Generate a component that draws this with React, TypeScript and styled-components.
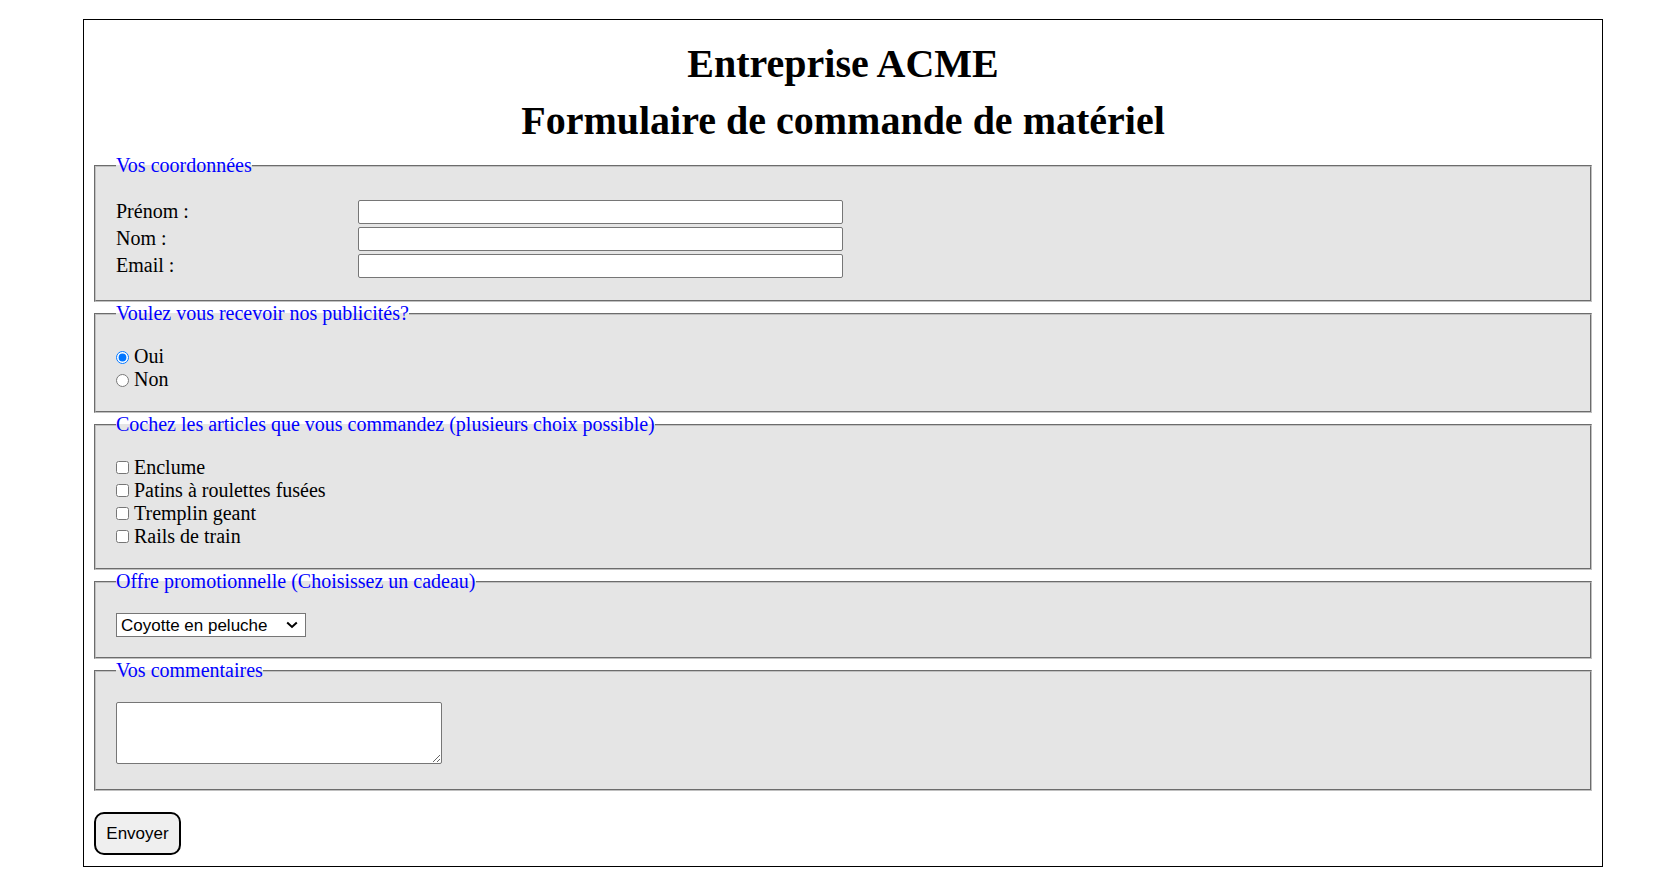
import React from "react";
import styled, { createGlobalStyle } from "styled-components";

const GlobalStyle = createGlobalStyle`
  html, body {
    margin: 0;
    padding: 0;
    background: #ffffff;
  }
  body {
    font-family: "Liberation Serif", "Times New Roman", serif;
    font-size: 20px;
    color: #000000;
  }
  * {
    box-sizing: border-box;
  }
`;

const Page = styled.div`
  padding: 19px 68px 19px 83px;
`;

const Frame = styled.form`
  border: 1px solid #000000;
  padding: 21px 10px 11px;
  display: flex;
  flex-direction: column;
  align-items: stretch;
`;

const Header = styled.header`
  text-align: center;
  margin-bottom: 10px;
`;

const Title = styled.h1<{ $gap?: number }>`
  margin: 0 0 ${(p) => p.$gap ?? 0}px;
  font-family: "Liberation Serif", "Times New Roman", serif;
  font-size: 40px;
  line-height: 46px;
  font-weight: 700;
`;

const Fieldset = styled.fieldset`
  margin: 0;
  padding: 20px;
  border: 2px groove #c0c0c0;
  background: #e5e5e5;
  min-width: 0;
`;

const Legend = styled.legend`
  padding: 0;
  color: #0000ff;
  font-family: "Liberation Serif", "Times New Roman", serif;
  font-size: 20px;
  line-height: 23px;
`;

const Rows = styled.div`
  display: flex;
  flex-direction: column;
  padding: 1px 0 1px;
`;

const Row = styled.div`
  display: flex;
  align-items: center;
  height: 27px;
`;

const FieldLabel = styled.label`
  width: 242px;
  flex: none;
  line-height: 23px;
`;

const TextInput = styled.input`
  width: 485px;
  height: 24px;
  margin: 0;
  padding: 1px 3px;
  border: 1px solid #767676;
  border-radius: 2px;
  background: #ffffff;
  font-family: "Liberation Sans", Arial, sans-serif;
  font-size: 15px;
`;

const Choice = styled.label`
  display: block;
  line-height: 23px;
  height: 23px;
`;

const Mark = styled.input<{ $drop?: number }>`
  width: 13px;
  height: 13px;
  margin: 0 5px 0 0;
  vertical-align: ${(p) => (p.$drop ? `-${p.$drop}px` : "baseline")};
`;

const SelectWrap = styled.div`
  position: relative;
  width: 190px;
`;

const GiftSelect = styled.select`
  display: block;
  width: 190px;
  height: 24px;
  margin: 0;
  padding: 0 24px 0 4px;
  border: 1px solid #767676;
  border-radius: 0;
  background-color: #ffffff;
  color: #000000;
  font-family: "Liberation Sans", Arial, sans-serif;
  font-size: 17px;
  appearance: none;
  -webkit-appearance: none;
`;

const Chevron = styled.svg`
  position: absolute;
  right: 8px;
  top: 8px;
  width: 12px;
  height: 8px;
  pointer-events: none;
`;

const Comments = styled.textarea`
  display: block;
  width: 326px;
  height: 62px;
  margin: 0 0 5px;
  border: 1px solid #767676;
  border-radius: 2px;
  background: #ffffff;
  font-family: "Liberation Mono", monospace;
  font-size: 15px;
`;

const SubmitButton = styled.button`
  align-self: flex-start;
  margin-top: 21px;
  width: 87px;
  height: 43px;
  padding: 0;
  border: 2px solid #000000;
  border-radius: 10px;
  background: #efefef;
  color: #000000;
  font-family: "Liberation Sans", Arial, sans-serif;
  font-size: 17px;
  cursor: pointer;
`;

const contactFields = [
  { id: "prenom", label: "Prénom :", type: "text" },
  { id: "nom", label: "Nom :", type: "text" },
  { id: "email", label: "Email :", type: "email" },
];

const articles = [
  "Enclume",
  "Patins à roulettes fusées",
  "Tremplin geant",
  "Rails de train",
];

export default function App() {
  return (
    <>
      <GlobalStyle />
      <Page>
        <Frame onSubmit={(e) => e.preventDefault()}>
          <Header>
            <Title $gap={11}>Entreprise ACME</Title>
            <Title as="h2">Formulaire de commande de matériel</Title>
          </Header>

          <Fieldset>
            <Legend>Vos coordonnées</Legend>
            <Rows>
              {contactFields.map((f) => (
                <Row key={f.id}>
                  <FieldLabel htmlFor={f.id}>{f.label}</FieldLabel>
                  <TextInput id={f.id} name={f.id} type={f.type} />
                </Row>
              ))}
            </Rows>
          </Fieldset>

          <Fieldset>
            <Legend>Voulez vous recevoir nos publicités?</Legend>
            <Choice>
              <Mark type="radio" name="pub" value="oui" defaultChecked $drop={1} />
              Oui
            </Choice>
            <Choice>
              <Mark type="radio" name="pub" value="non" $drop={1} />
              Non
            </Choice>
          </Fieldset>

          <Fieldset>
            <Legend>Cochez les articles que vous commandez (plusieurs choix possible)</Legend>
            {articles.map((a) => (
              <Choice key={a}>
                <Mark type="checkbox" name="articles" value={a} />
                {a}
              </Choice>
            ))}
          </Fieldset>

          <Fieldset>
            <Legend>Offre promotionnelle (Choisissez un cadeau)</Legend>
            <SelectWrap>
              <GiftSelect name="cadeau" defaultValue="coyotte">
                <option value="coyotte">Coyotte en peluche</option>
                <option value="bipbip">Bip Bip en peluche</option>
                <option value="dynamite">Bâton de dynamite</option>
              </GiftSelect>
              <Chevron viewBox="0 0 12 8" aria-hidden="true">
                <path d="M1.2 1.5 L6 6 L10.8 1.5" fill="none" stroke="#000" strokeWidth="2" />
              </Chevron>
            </SelectWrap>
          </Fieldset>

          <Fieldset>
            <Legend>Vos commentaires</Legend>
            <Comments name="commentaires" />
          </Fieldset>

          <SubmitButton type="submit">Envoyer</SubmitButton>
        </Frame>
      </Page>
    </>
  );
}
